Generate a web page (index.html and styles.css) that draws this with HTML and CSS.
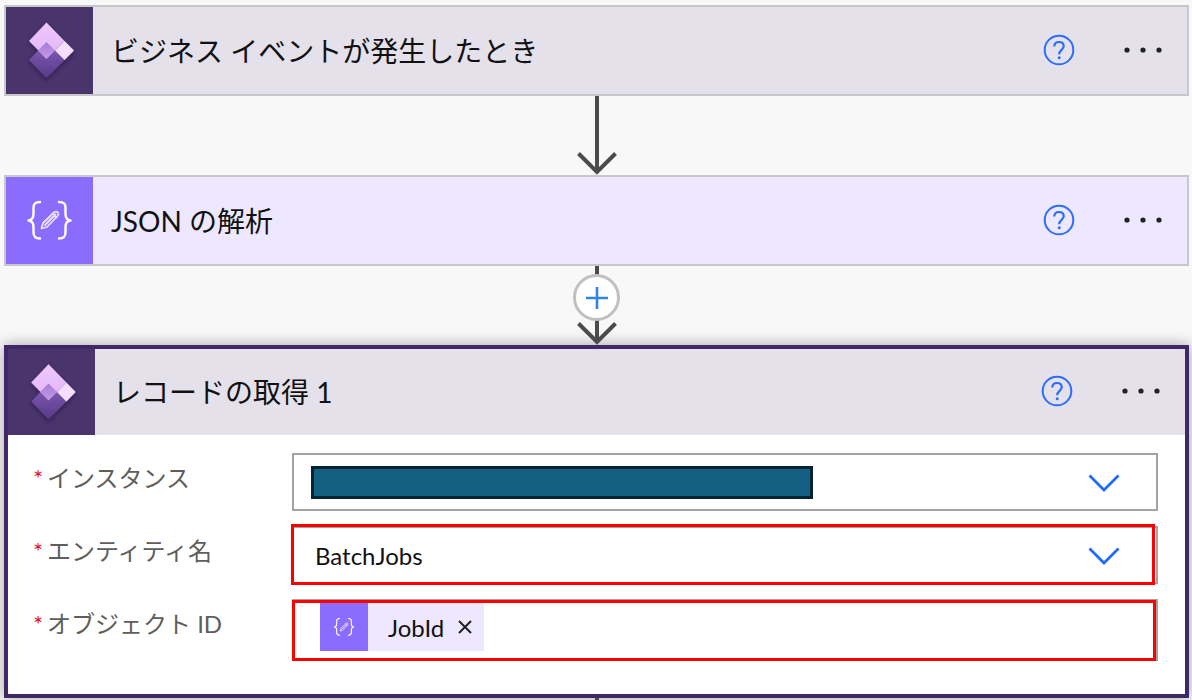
FILE: index.html
```html
<!DOCTYPE html>
<html lang="ja">
<head>
<meta charset="utf-8">
<title>フロー</title>
<link rel="stylesheet" href="styles.css">
</head>
<body>
<svg class="defs" aria-hidden="true">
  <defs>
    <linearGradient id="dark" x1="0" y1="0" x2="0" y2="1">
      <stop offset="0" stop-color="#8460b8"/><stop offset="1" stop-color="#59398a"/>
    </linearGradient>
    <linearGradient id="light" x1="0" y1="0" x2="0" y2="1">
      <stop offset="0" stop-color="#edc9fb"/><stop offset="1" stop-color="#e3b3fa"/>
    </linearGradient>
    <linearGradient id="mid" x1="0" y1="0" x2="0" y2="1">
      <stop offset="0" stop-color="#a77bd3"/><stop offset="1" stop-color="#c39aea"/>
    </linearGradient>
    <filter id="soft" x="-30%" y="-30%" width="160%" height="160%">
      <feDropShadow dx="0" dy="2" stdDeviation="2" flood-color="#1c0c38" flood-opacity=".6"/>
    </filter>
    <symbol id="finops" viewBox="0 0 87 87">
      <g filter="url(#soft)">
        <path d="M40.500 35L58.500 53L40.500 71L23 53Z" fill="url(#dark)"/>
        <path d="M40.500 15.500L58.500 34L40.500 51.500L23 34Z" fill="url(#light)"/>
        <path d="M58.500 34L68 43.500L58.500 53L49 43.500Z" fill="#f5defd"/>
        <path d="M40.500 35L49 43.500L40.500 52L32 43.500Z" fill="url(#mid)"/>
      </g>
    </symbol>
    <symbol id="json" viewBox="0 0 87 87">
      <g fill="none" stroke="#fff" stroke-linecap="round" stroke-linejoin="round">
        <path stroke-width="2.400" d="M34 25C29 25 27.500 27 27.500 31V37C27.500 41 26 43 22.500 43.500C26 44 27.500 46 27.500 50V55C27.500 59.500 29 61.500 34 61.500M53 25C58 25 59.500 27 59.500 31V37C59.500 41 61 43 64.500 43.500C61 44 59.500 46 59.500 50V55C59.500 59.500 58 61.500 53 61.500"/>
        <path stroke-width="1.800" stroke="#e9e2ff" d="M35.500 51.500L37 46L48.500 35Q50.500 34 52 35.500Q53 37 52 38.500L41 50ZM39 48L49.500 37.500M46.500 36.500L50.500 40.500"/>
      </g>
    </symbol>
    <symbol id="help" viewBox="0 0 32 32">
      <g fill="none" stroke="#2b6dff">
        <circle cx="16" cy="16" r="14.300" stroke-width="2"/>
        <path stroke-width="2.200" d="M11.300 12.500C11.300 9.700 13.300 8 16 8C18.800 8 20.700 9.700 20.700 12.200C20.700 15.800 16.200 16 16.200 20.200"/>
      </g>
      <circle cx="16.200" cy="23.800" r="1.500" fill="#2b6dff"/>
    </symbol>
    <symbol id="dots" viewBox="0 0 40 8">
      <g fill="#222"><circle cx="4" cy="4" r="2.600"/><circle cx="20" cy="4" r="2.600"/><circle cx="36" cy="4" r="2.600"/></g>
    </symbol>
    <symbol id="chevron" viewBox="0 0 32 18">
      <path d="M1.500 1.500L16 16L30.500 1.500" fill="none" stroke="#1f6bff" stroke-width="2.800"/>
    </symbol>
    <symbol id="arrow" viewBox="0 0 40 79">
      <path d="M20 0V76M1.500 57.500L20 76L38.500 57.500" fill="none" stroke="#4b4b4b" stroke-width="4"/>
    </symbol>
  </defs>
</svg>

<main class="flow">
  <section class="card">
    <header class="card-header">
      <svg class="card-icon finops" aria-hidden="true"><use href="#finops"/></svg>
      <h2 class="card-title">ビジネス イベントが発生したとき</h2>
      <button class="icon-button" type="button" aria-label="ヘルプ"><svg class="help"><use href="#help"/></svg></button>
      <button class="icon-button" type="button" aria-label="メニュー"><svg class="dots"><use href="#dots"/></svg></button>
    </header>
  </section>

  <div class="connector"><svg class="arrow" aria-hidden="true"><use href="#arrow"/></svg></div>

  <section class="card">
    <header class="card-header lilac">
      <svg class="card-icon json" aria-hidden="true"><use href="#json"/></svg>
      <h2 class="card-title">JSON の解析</h2>
      <button class="icon-button" type="button" aria-label="ヘルプ"><svg class="help"><use href="#help"/></svg></button>
      <button class="icon-button" type="button" aria-label="メニュー"><svg class="dots"><use href="#dots"/></svg></button>
    </header>
  </section>

  <div class="connector">
    <svg class="arrow" aria-hidden="true"><use href="#arrow"/></svg>
    <button class="add-step" type="button" aria-label="ステップの追加">
      <svg class="plus" viewBox="0 0 22 22"><path d="M11 0V22M0 11H22" stroke="#2f86e0" stroke-width="2.600"/></svg>
    </button>
  </div>

  <section class="card selected">
    <header class="card-header">
      <svg class="card-icon finops" aria-hidden="true"><use href="#finops"/></svg>
      <h2 class="card-title">レコードの取得 1</h2>
      <button class="icon-button" type="button" aria-label="ヘルプ"><svg class="help"><use href="#help"/></svg></button>
      <button class="icon-button" type="button" aria-label="メニュー"><svg class="dots"><use href="#dots"/></svg></button>
    </header>
    <form class="fields">
      <label class="label" for="instance"><span class="required">*</span>インスタンス</label>
      <div class="field">
        <select class="control" id="instance"><option></option></select>
        <span class="redaction"></span>
        <svg class="chevron" aria-hidden="true"><use href="#chevron"/></svg>
      </div>

      <label class="label" for="entity"><span class="required">*</span>エンティティ名</label>
      <div class="field">
        <select class="control" id="entity"><option>BatchJobs</option></select>
        <svg class="chevron" aria-hidden="true"><use href="#chevron"/></svg>
        <span class="highlight entity"></span>
      </div>

      <label class="label" for="object-id"><span class="required">*</span>オブジェクト ID</label>
      <div class="field">
        <div class="control tokens">
          <span class="token">
            <svg class="token-icon json" aria-hidden="true"><use href="#json"/></svg>
            <span class="token-name">JobId</span>
            <button class="token-remove" type="button" aria-label="削除">
              <svg class="cross" viewBox="0 0 14 14"><path d="M1 1L13 13M13 1L1 13" stroke="#222" stroke-width="2"/></svg>
            </button>
          </span>
          <input class="token-input" id="object-id" type="text">
        </div>
        <span class="highlight object"></span>
      </div>
    </form>
  </section>

  <div class="tail"></div>
</main>
</body>
</html>
```
FILE: styles.css
```css
* { box-sizing: border-box; }

body {
  margin: 0;
  background: #f8f8f8;
  color: #111;
  font-family: Lato, "Noto Sans CJK JP", sans-serif;
}

svg { display: block; }

button {
  padding: 0;
  border: 0;
  background: none;
  cursor: pointer;
}

.defs { position: absolute; width: 0; height: 0; }

.flow {
  display: flex;
  flex-direction: column;
  min-height: 100vh;
  padding: 5px 3px 0 4px;
}

.card { border: 2px solid #c8c7c9; }

.card-header {
  display: flex;
  align-items: center;
  height: 87px;
  padding-right: 23px;
  background: #e4e1eb;
}

.lilac { background: #ede8ff; }

.card-icon { flex: none; width: 87px; height: 87px; }
.finops { background: #49346c; }
.json { background: #8c6cff; }

.card-title {
  flex: 1;
  margin: 0;
  padding-left: 18px;
  font-size: 28px;
  font-weight: 400;
  line-height: 40px;
}

.icon-button { margin-left: 47px; padding-bottom: 2px; }
.help { width: 32px; height: 32px; }
.dots { width: 42px; height: 8px; }

.connector {
  position: relative;
  display: flex;
  justify-content: center;
  height: 79px;
}

.arrow { width: 40px; height: 79px; }

.add-step {
  position: absolute;
  top: 8px;
  display: grid;
  place-items: center;
  width: 47px;
  height: 47px;
  border: 3px solid #c2c0bf;
  border-radius: 50%;
  background: #fff;
}

.plus { width: 22px; height: 22px; }

.selected {
  border: 4px solid #402867;
  background: #fff;
  box-shadow: 0 0 14px rgba(0, 0, 0, .35);
}

.selected .card-header { height: 86px; }
.selected .finops { height: 86px; }

.fields {
  display: grid;
  grid-template-columns: 259px 1fr;
  row-gap: 15px;
  padding: 18px 27px 33px 25px;
}

.label {
  display: flex;
  gap: 4px;
  padding-top: 8px;
  color: #605e5c;
  font-size: 24px;
  line-height: 34px;
}

.required { width: 10px; color: #e81123; font-size: 24px; }

.field { position: relative; }

.control {
  display: block;
  width: 100%;
  height: 58px;
  padding: 0 80px 0 21px;
  border: 2px solid #a3a3a3;
  border-radius: 0;
  background: #fff;
  color: #111;
  appearance: none;
  font-family: inherit;
  font-size: 24px;
}

.chevron {
  position: absolute;
  top: 21px;
  right: 38px;
  width: 32px;
  height: 18px;
  pointer-events: none;
}

.redaction {
  position: absolute;
  top: 13px;
  left: 19px;
  width: 58%;
  height: 33px;
  border: 3px solid #042433;
  background: #156082;
}

.highlight {
  position: absolute;
  border: 3px solid #f00;
  pointer-events: none;
}

.entity { inset: -2px 3px -1px -1px; }
.object { inset: 1px 2px 0 0; }

.tokens {
  display: flex;
  align-items: flex-start;
  height: 62px;
  padding: 2px 26px;
}

.token {
  display: flex;
  align-items: center;
  height: 48px;
  padding-right: 12px;
  background: #ede8ff;
}

.token-icon { width: 48px; height: 48px; padding: 4px; }
.token-name { padding: 0 14px 0 20px; }

.cross { width: 14px; height: 14px; }

.token-input {
  flex: 1;
  min-width: 0;
  height: 48px;
  border: 0;
  outline: 0;
  font: inherit;
}

.tail {
  flex: 1;
  align-self: center;
  width: 4px;
  background: #4b4b4b;
}
```
